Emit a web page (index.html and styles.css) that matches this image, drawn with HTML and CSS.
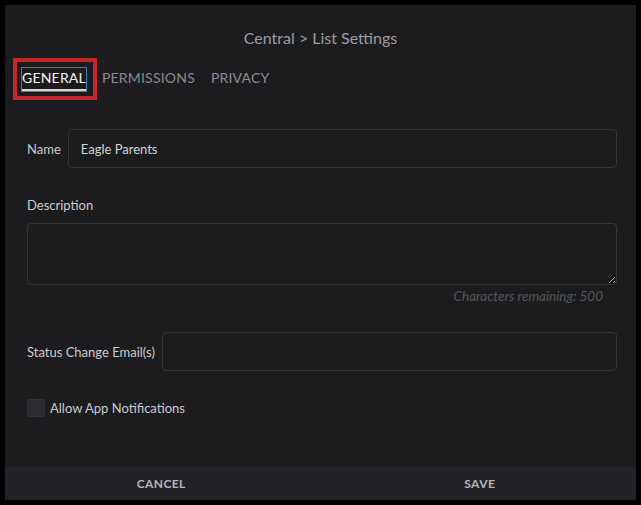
FILE: index.html
```html
<!DOCTYPE html>
<html lang="en">
<head>
<meta charset="utf-8">
<title>List Settings</title>
<link rel="stylesheet" href="styles.css">
</head>
<body>
<div class="panel">
  <header class="header">
    <h1 class="title">Central &gt; List Settings</h1>
    <nav class="tabs">
      <span class="tab tab-active">GENERAL</span>
      <span class="tab">PERMISSIONS</span>
      <span class="tab">PRIVACY</span>
    </nav>
  </header>
  <form class="form">
    <div class="row row-name">
      <label class="label" for="name">Name</label>
      <input class="field" id="name" type="text" value="Eagle Parents">
    </div>
    <div class="block-desc">
      <label class="label" for="desc">Description</label>
      <textarea class="field area" id="desc"></textarea>
      <div class="counter">Characters remaining: 500</div>
    </div>
    <div class="row row-email">
      <label class="label" for="email">Status Change Email(s)</label>
      <input class="field" id="email" type="text">
    </div>
    <div class="check-row">
      <span class="checkbox"></span>
      <span class="check-label">Allow App Notifications</span>
    </div>
  </form>
  <footer class="footer">
    <button class="btn" type="button">CANCEL</button>
    <button class="btn btn-save" type="button">SAVE</button>
  </footer>
</div>
</body>
</html>
```
FILE: styles.css
```css
html, body {
  margin: 0;
  padding: 0;
  background: #000;
}
body {
  padding: 5px;
  font-family: Lato, "Open Sans", sans-serif;
}
.panel {
  width: 631px;
  height: 495px;
  background: #1c1c1e;
  display: flex;
  flex-direction: column;
}
.header {
  padding-top: 21px;
}
.title {
  margin: 0;
  font-size: 16px;
  font-weight: 400;
  line-height: 24px;
  text-align: center;
  color: #9d9da3;
}
.tabs {
  margin-top: 18px;
  padding-left: 17px;
  display: flex;
  gap: 16px;
  height: 20px;
}
.tab {
  font-size: 14px;
  line-height: 20px;
  color: #8b8b91;
  letter-spacing: 0.2px;
}
.tab-active {
  position: relative;
  color: #f2f2f2;
  padding-bottom: 1px;
  border-bottom: 2px solid #d6d6d6;
  outline: 1px solid #3b82bd;
  outline-offset: 0;
  align-self: flex-start;
}
.tab-active::before {
  content: "";
  position: absolute;
  left: -9px;
  right: -11px;
  top: -10px;
  bottom: -11px;
  border: 4px solid #c3272b;
}
.form {
  flex: 1;
  padding: 41px 19px 0 22px;
}
.label {
  font-size: 13px;
  color: #cacace;
  line-height: 18px;
}
.row {
  display: flex;
  align-items: center;
}
.row .label {
  margin-right: 7px;
  white-space: nowrap;
}
.field {
  box-sizing: border-box;
  flex: 1;
  background: #1c1c1e;
  border: 1px solid #353538;
  border-radius: 4px;
  color: #d4d4d6;
  font-family: Lato, "Open Sans", sans-serif;
  font-size: 13px;
  padding: 0 12px;
  outline: none;
  color-scheme: dark;
}
.row-name .field {
  height: 39px;
}
.block-desc {
  margin-top: 28px;
  display: flex;
  flex-direction: column;
}
.area {
  flex: none;
  margin-top: 9px;
  height: 62px;
  width: 100%;
  resize: vertical;
  display: block;
}
.counter {
  margin-top: 3px;
  padding-right: 14px;
  text-align: right;
  font-style: italic;
  font-size: 13.5px;
  line-height: 16px;
  color: #55555a;
}
.row-email {
  margin-top: 28px;
}
.row-email .field {
  height: 39px;
}
.check-row {
  margin-top: 28px;
  display: flex;
  align-items: center;
  gap: 5px;
}
.checkbox {
  width: 18px;
  height: 18px;
  box-sizing: border-box;
  border-radius: 3px;
  background: #2c2c30;
  border: 1px solid #333337;
}
.check-label {
  font-size: 13px;
  color: #cacace;
  line-height: 18px;
}
.footer {
  height: 33px;
  background: #232327;
  display: flex;
}
.btn {
  flex: 1;
  background: transparent;
  border: 0;
  color: #b6b6ba;
  font-family: Lato, "Open Sans", sans-serif;
  font-size: 12px;
  font-weight: 700;
  letter-spacing: 0.4px;
  padding: 0;
}
.btn-save {
  padding-left: 6px;
}
```
